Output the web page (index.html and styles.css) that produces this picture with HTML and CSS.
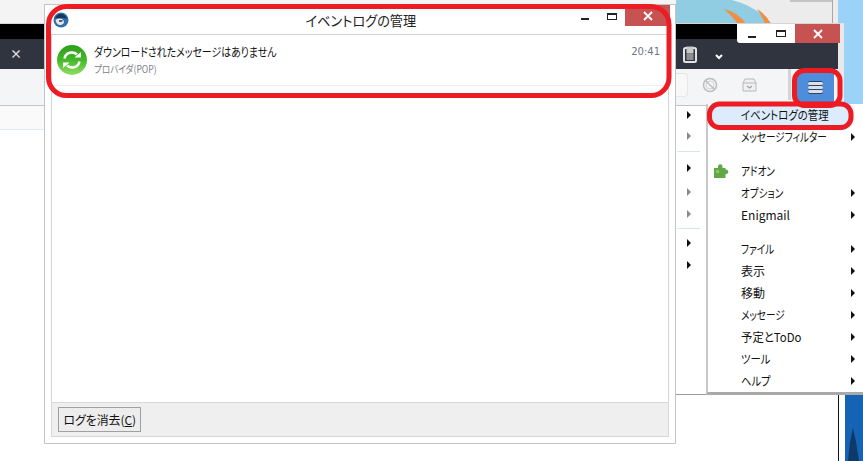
FILE: index.html
```html
<!DOCTYPE html>
<html lang="ja">
<head>
<meta charset="utf-8">
<title>イベントログの管理</title>
<link rel="stylesheet" href="styles.css">
</head>
<body>
<div class="desktop">
  <svg class="wallpaper" width="863" height="461" viewBox="0 0 863 461">
    <rect x="0" y="0" width="863" height="461" fill="#ffffff"/>
    <rect x="0" y="0" width="676" height="23" fill="#f4f4f4"/>
    <rect x="676" y="0" width="187" height="110" fill="#9ad2f8"/>
    <rect x="730" y="0" width="108" height="24" fill="#ececec"/>
    <path d="M676 0H732Q756 6 772 24H676Z" fill="#90cde3"/>
    <path d="M790 0H833V2H790Z" fill="#c4c4c4"/>
    <rect x="832" y="0" width="1" height="24" fill="#a8a8a8"/>
    <path d="M724 9Q738 12 746 24H738Q732 16 724 9Z" fill="#ef8f45"/>
    <path d="M757 9Q766 14 771 24H765Q762 16 757 9Z" fill="#ef8f45"/>
    <rect x="838" y="395" width="1" height="66" fill="#111111"/>
    <rect x="845" y="395" width="18" height="66" fill="#1463b4"/>
    <path d="M848 461L850 442L853 428L856 442L859 461Z" fill="#0d3a66"/>
  </svg>

  <section class="app">
    <div class="app-title">
      <div class="caption">
        <span class="cap-btn"><i class="min"></i></span>
        <span class="cap-btn"><i class="max"></i></span>
        <span class="cap-close">
          <svg width="10" height="10" viewBox="0 0 10 10"><path d="M1 1L9 9M9 1L1 9" stroke="#fff" stroke-width="1.8"/></svg>
        </span>
      </div>
    </div>
    <div class="app-tabs">
      <span class="tab-x">×</span>
      <svg class="clip" width="14" height="17" viewBox="0 0 14 17"><rect x="1" y="2" width="12" height="14" rx="1.5" fill="none" stroke="#e4e4e4" stroke-width="2"/><rect x="3.500" y="0.500" width="7" height="7" fill="#c9c9c9"/><rect x="3.500" y="8" width="7" height="6" fill="#8c8f96"/></svg>
      <svg class="chev" width="8" height="6" viewBox="0 0 8 6"><path d="M1 1L4 4L7 1" fill="none" stroke="#fff" stroke-width="2"/></svg>
    </div>
    <div class="app-tools">
      <span class="tool-drop"></span>
      <svg class="tool-no" width="16" height="16" viewBox="0 0 16 16"><circle cx="8" cy="8" r="6.500" fill="none" stroke="#bdbdbd" stroke-width="1.500"/><circle cx="8" cy="8" r="4" fill="none" stroke="#d2d2d2"/><path d="M4 4L12 12" stroke="#bdbdbd" stroke-width="1.500"/></svg>
      <svg class="tool-box" width="15" height="14" viewBox="0 0 15 14"><path d="M3 1H12L14 5V13H1V5Z" fill="#f0f0f0" stroke="#b8b8b8"/><path d="M1 5H14" stroke="#b8b8b8"/><path d="M5 8L7.500 10L10 8" fill="none" stroke="#a0a0a0" stroke-width="1.300"/></svg>
      <span class="tool-sep"></span>
      <span class="burger"><i></i><i></i><i></i></span>
    </div>
    <div class="app-strip"></div>
    <div class="app-body">
      <div class="left-pane"><div class="left-head"></div></div>
      <ul class="sidecol">
        <li class="row"><b class="tri"></b></li>
        <li class="row"><b class="tri dim"></b></li>
        <li class="rule first"></li>
        <li class="row"><b class="tri"></b></li>
        <li class="row low"><b class="tri dim"></b></li>
        <li class="row"><b class="tri dim"></b></li>
        <li class="rule"></li>
        <li class="row"><b class="tri"></b></li>
        <li class="row"><b class="tri"></b></li>
      </ul>
    </div>
  </section>

  <nav class="menu">
    <div class="mi hot"><span class="t">イベントログの管理</span></div>
    <div class="mi"><span class="t k">メッセージフィルター</span><b class="tri"></b></div>
    <div class="gap"></div>
    <div class="mi">
      <svg class="puzzle" width="17" height="16" viewBox="0 0 17 16"><path d="M1 5H5V3.500A2.200 2.200 0 1 1 9.500 3.500V5H12.500V6.500A2.300 2.300 0 1 1 12.500 11V15H1Z" fill="#5fa845"/><path d="M3 7H6V10H3Z" fill="#86c46d"/></svg>
      <span class="t k">アドオン</span>
    </div>
    <div class="mi"><span class="t k">オプション</span><b class="tri"></b></div>
    <div class="mi"><span class="t">Enigmail</span><b class="tri"></b></div>
    <div class="gap"></div>
    <div class="mi"><span class="t k">ファイル</span><b class="tri"></b></div>
    <div class="mi"><span class="t">表示</span><b class="tri"></b></div>
    <div class="mi"><span class="t">移動</span><b class="tri"></b></div>
    <div class="mi"><span class="t k">メッセージ</span><b class="tri"></b></div>
    <div class="mi"><span class="t todo">予定とToDo</span><b class="tri"></b></div>
    <div class="mi"><span class="t k2">ツール</span><b class="tri"></b></div>
    <div class="mi"><span class="t k2">ヘルプ</span><b class="tri"></b></div>
  </nav>

  <section class="dialog">
    <header class="dlg-title">
      <svg class="dlg-logo" width="16" height="16" viewBox="0 0 16 16"><circle cx="8" cy="8" r="7.500" fill="#2f6ea8"/><path d="M2 6Q4 1.500 9 2Q13 3 14 7Q10 5 7 6Z" fill="#12365c"/><path d="M2.500 8Q5 5.500 9 7Q12 9 10.500 11.500Q8 14 5 12.500Q3 11 2.500 8Z" fill="#e6e6e6"/><path d="M6 8H10L9 10H6Z" fill="#5a6470"/></svg>
      <h1><span class="t title">イベントログの管理</span></h1>
      <div class="dlg-caption">
        <i class="min"></i>
        <i class="max"></i>
        <span class="dlg-close">
          <svg width="10" height="10" viewBox="0 0 10 10"><path d="M1 1L9 9M9 1L1 9" stroke="#fff" stroke-width="1.800"/></svg>
        </span>
      </div>
    </header>
    <div class="dlg-list">
      <article class="log">
        <svg class="sync" width="30" height="30" viewBox="0 0 30 30">
          <defs>
            <linearGradient id="ball" x1="0" y1="0" x2="0" y2="1">
              <stop offset="0" stop-color="#2c9e1a"/>
              <stop offset="0.5" stop-color="#44b82a"/>
              <stop offset="1" stop-color="#8ee05e"/>
            </linearGradient>
          </defs>
          <circle cx="15" cy="15" r="15" fill="url(#ball)"/>
          <path d="M7.500 13.500A7.500 7.500 0 0 1 20 9.500" fill="none" stroke="#fff" stroke-width="2.500"/>
          <path d="M22.500 16.500A7.500 7.500 0 0 1 10 20.500" fill="none" stroke="#fff" stroke-width="2.500"/>
          <path d="M17.500 12.500H24V7Z" fill="#fff"/>
          <path d="M12.500 17.500H6V23Z" fill="#fff"/>
        </svg>
        <div class="log-text">
          <p class="log-msg"><span class="t msg">ダウンロードされたメッセージはありません</span></p>
          <p class="log-sub"><span class="t sub">プロバイダ(POP)</span></p>
        </div>
        <time class="log-time">20:41</time>
      </article>
    </div>
    <footer class="dlg-foot">
      <button class="clear" type="button"><span class="t btn">ログを消去(<u>C</u>)</span></button>
    </footer>
  </section>

  <svg class="marks" width="863" height="461" viewBox="0 0 863 461">
    <rect x="48.500" y="6.500" width="620.500" height="89" rx="18" fill="none" stroke="#ed1c24" stroke-width="5"/>
    <rect x="794.500" y="70.500" width="45.500" height="35" rx="10" fill="none" stroke="#ed1c24" stroke-width="5"/>
    <rect x="709.500" y="104" width="141.500" height="23.500" rx="10" fill="none" stroke="#ed1c24" stroke-width="5"/>
  </svg>
</div>
</body>
</html>
```
FILE: styles.css
```css
* { box-sizing: border-box; }
html, body { margin: 0; padding: 0; }
body {
  width: 863px;
  height: 461px;
  overflow: hidden;
  background: #fff;
  font-family: "Noto Sans CJK JP", "Noto Sans", sans-serif;
  font-feature-settings: "palt";
  font-size: 12px;
  color: #111;
}
.desktop { position: relative; width: 863px; height: 461px; overflow: hidden; }
.wallpaper, .marks { position: absolute; left: 0; top: 0; display: block; }
.marks { pointer-events: none; }

/* Condensed text: the reference face has narrow kana */
.t { display: inline-block; white-space: nowrap; transform-origin: 0 50%; }
.k { transform: scaleX(0.8); }
.k2 { transform: scaleX(0.86); }
.todo { transform: scaleX(0.95); }
.hot .t { transform: scaleX(0.87); }
.title { transform: scaleX(0.94); transform-origin: 50% 50%; }
.msg { transform: scaleX(0.824); }
.sub { transform: scaleX(0.86); }
.btn { transform: scaleX(0.99); transform-origin: 50% 50%; }

/* Background application window */
.app {
  position: absolute;
  left: 0;
  top: 23px;
  width: 844px;
  height: 372px;
  display: flex;
  flex-direction: column;
  border-right: 6px solid #e9e9e9;
  border-top: 1px solid #d6d6d6;
}
.app-title { height: 15px; background: #000; display: flex; justify-content: flex-end; position: relative; }
.caption {
  position: absolute;
  right: -2px;
  top: 0;
  height: 19px;
  display: flex;
  background: #fff;
  border-bottom-left-radius: 3px;
  z-index: 1;
}
.cap-btn { width: 29px; display: flex; align-items: center; justify-content: center; }
.cap-close { width: 45px; background: #c75252; display: flex; align-items: center; justify-content: center; }
.min { display: block; width: 8px; height: 2px; background: #222; margin-top: 6px; }
.max { display: block; width: 10px; height: 7px; border: 1px solid #222; border-top-width: 2px; }
.app-tabs {
  height: 30px;
  background: #30343e;
  display: flex;
  align-items: center;
  position: relative;
  padding-left: 10px;
}
.tab-x { color: #dcdcdc; font-size: 12px; font-weight: 700; line-height: 1; width: 673px; }
.clip { margin-top: 1px; }
.chev { margin-left: 18px; margin-top: 6px; }
.app-tools {
  height: 31px;
  background: #f4f5f7;
  display: flex;
  align-items: center;
  padding-left: 676px;
  position: relative;
}
.tool-drop {
  width: 12px;
  height: 24px;
  border: 1px solid #e6e6e6;
  border-left: 0;
  border-radius: 0 4px 4px 0;
  background: #f8f8f8;
}
.tool-no { margin-left: 14px; }
.tool-box { margin-left: 24px; }
.tool-sep { width: 3px; height: 31px; background: #d4d4d4; margin-left: 31px; }
.burger {
  width: 37px;
  height: 31px;
  margin-left: 6px;
  margin-top: 4px;
  padding-bottom: 3px;
  background: #4d8ddb;
  display: flex;
  flex-direction: column;
  align-items: center;
  justify-content: center;
  align-self: flex-start;
}
.burger i { display: block; width: 15px; height: 4px; background: #d9e2ec; border-top: 1px solid #33435c; border-radius: 2px; }
.burger i:last-child { box-shadow: 0 1px 0 #33435c; }
.app-strip { height: 6px; background: #f4f5f7; border-bottom: 1px solid #c4c4c4; }
.app-body { flex: 1; display: flex; justify-content: space-between; min-height: 0; }
.left-pane { width: 44px; }
.left-head { height: 24px; background: #fafafa; border-bottom: 1px solid #deeaf5; }
.sidecol {
  list-style: none;
  margin: 0;
  padding: 0 138px 0 1px;
  width: 162px;
  background: #fff;
  border-bottom: 1px solid #9a9a9a;
  display: flex;
  flex-direction: column;
}
.sidecol .row { height: 22px; display: flex; align-items: center; justify-content: center; flex: none; }
.sidecol .row:first-child { height: 18px; }
.sidecol .row:nth-child(2) { height: 24px; }
.sidecol .row.low { height: 24px; padding-top: 2px; }
.sidecol .rule { height: 1px; background: #d4e4f5; margin: 3px 0; flex: none; }
.sidecol .rule.first { margin-bottom: 5px; }
.tri {
  display: block;
  width: 0;
  height: 0;
  border-left: 4px solid #111;
  border-top: 4px solid transparent;
  border-bottom: 4px solid transparent;
}
.tri.dim { border-left-color: #8a8a8a; }

/* Menu */
.menu {
  position: absolute;
  left: 706px;
  top: 104px;
  width: 157px;
  height: 291px;
  background: #fff;
  border-left: 2px solid #c8c8c8;
  border-bottom: 3px solid #a9a9a9;
}
.mi { height: 22px; display: flex; align-items: center; position: relative; padding-left: 33px; line-height: 22px; white-space: nowrap; }
.mi .tri { position: absolute; left: 143px; top: 7px; }
.mi.hot { background: #dcecfc; margin-left: 4px; padding-left: 29px; margin-right: 12px; }
.gap { height: 12px; }
.puzzle { position: absolute; left: 5px; top: 3px; }

/* Dialog */
.dialog {
  position: absolute;
  left: 44px;
  top: 4px;
  width: 632px;
  height: 440px;
  background: #fff;
  border: 1px solid #c4c4c4;
  display: flex;
  flex-direction: column;
  padding: 0 6px 6px;
}
.dlg-title {
  height: 30px;
  display: flex;
  align-items: center;
  justify-content: center;
  position: relative;
  border-bottom: 1px solid #d4d4d4;
  margin: 0 -1px 0 0;
}
.dlg-title h1 { margin: 0; font-size: 14px; font-weight: 400; color: #222; line-height: 30px; }
.dlg-logo { position: absolute; left: 2px; top: 7px; }
.dlg-caption { position: absolute; right: 0; top: 0; height: 21px; display: flex; align-items: flex-start; }
.dlg-caption .min { margin-top: 13px; }
.dlg-caption .max { margin: 8px 8px 0 18px; }
.dlg-close { width: 45px; height: 21px; background: #c75252; display: flex; align-items: center; justify-content: center; }
.dlg-list {
  flex: 1;
  border-left: 1px solid #d4d4d4;
  border-right: 1px solid #d4d4d4;
  background: #fff;
}
.log {
  height: 51px;
  display: flex;
  border-bottom: 1px solid #eeeeea;
  padding: 10px 8px 0 5px;
}
.sync { display: block; flex: none; }
.log-text { flex: 1; margin-left: 7px; }
.log-msg { margin: 0; font-size: 12px; line-height: 14px; color: #111; }
.log-sub { margin: 3px 0 0; font-size: 10px; line-height: 14px; color: #7e8288; }
.log-time { line-height: 14px; color: #6d7685; font-family: "DejaVu Sans", sans-serif; font-size: 10px; }
.dlg-foot {
  height: 35px;
  background: #efefef;
  border: 1px solid #d8d8d8;
  display: flex;
  align-items: center;
  padding-left: 6px;
}
.clear {
  width: 83px;
  height: 25px;
  padding: 0;
  font: inherit;
  font-feature-settings: "palt";
  color: #111;
  background: #ededed;
  border: 1px solid #a0a0a0;
}
```
